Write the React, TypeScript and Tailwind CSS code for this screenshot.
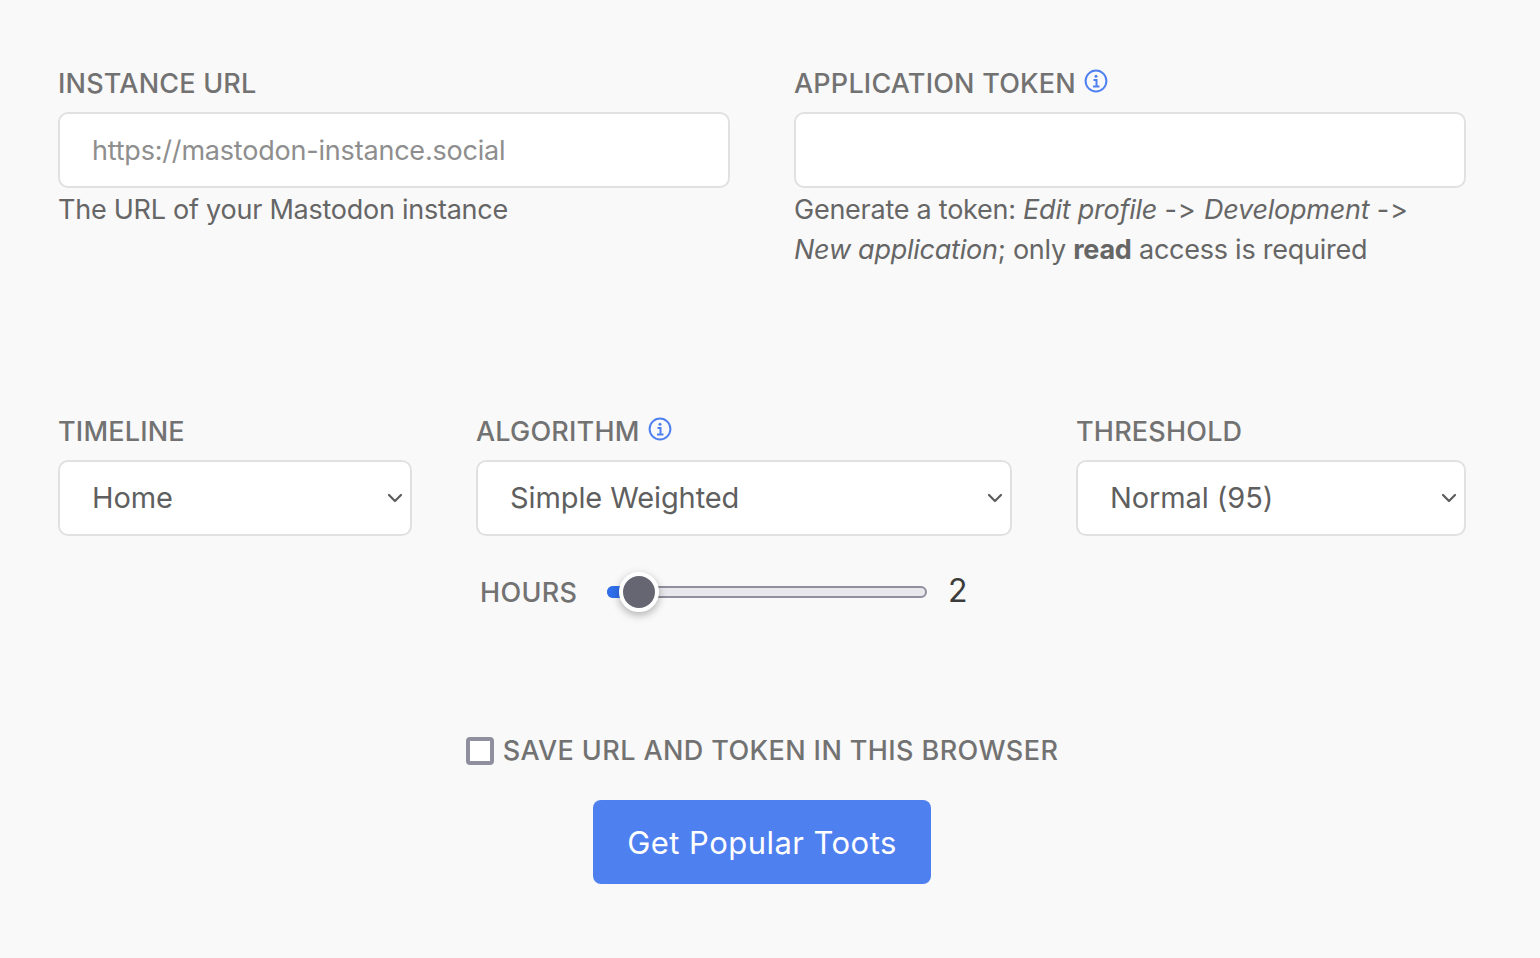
import { ChevronDown } from 'lucide-react';

function InfoIcon() {
  return (
    <svg width="24" height="24" viewBox="0 0 24 24" fill="none" stroke="#4f80ef" className="shrink-0">
      <circle cx="12" cy="12" r="10.4" strokeWidth="2" />
      <path d="M9.5 11h3v6.5M9 17.5h6.5" strokeWidth="2" />
      <circle cx="12" cy="7.2" r="1.5" fill="#4f80ef" stroke="none" />
    </svg>
  );
}

function Label({ text, info }: { text: string; info?: boolean }) {
  return (
    <div className="flex items-center gap-[8px] h-[40px] pt-[2px] text-[27px] leading-[38px] font-medium text-[#727272] tracking-[0.2px] uppercase">
      <span>{text}</span>
      {info && <span className="-mt-[6px]"><InfoIcon /></span>}
    </div>
  );
}

function SelectBox({ label, value, info, width }: { label: string; value: string; info?: boolean; width: string }) {
  return (
    <div className={width}>
      <Label text={label} info={info} />
      <div className="relative mt-[9px] h-[76px] bg-white border-2 border-[#e1e1e1] rounded-[10px] pl-[32px] flex items-center text-[29px] text-[#5f5f5f] tracking-[-0.1px]">
        {value}
        <ChevronDown size={24} strokeWidth={2.2} className="absolute right-[3px] top-[24px] text-[#5c5c5c]" />
      </div>
    </div>
  );
}

export default function App() {
  return (
    <div className="h-[958px] bg-[#f9f9f9] pl-[58px] pr-[74px] pt-[63px] overflow-hidden" style={{ fontFamily: 'Inter, "Liberation Sans", sans-serif' }}>
      <div className="flex gap-[64px]">
        <div className="w-[672px]">
          <Label text="Instance URL" />
          <input
            placeholder="https://mastodon-instance.social"
            className="mt-[9px] w-full h-[76px] bg-white border-2 border-[#e1e1e1] rounded-[10px] px-[32px] text-[27px] tracking-[-0.2px] placeholder:text-[#8e8e8e]"
          />
          <p className="text-[27px] leading-[40px] text-[#666666] mt-[2px] tracking-[-0.25px]">The URL of your Mastodon instance</p>
        </div>
        <div className="w-[672px]">
          <Label text="Application Token" info />
          <input className="mt-[9px] w-full h-[76px] bg-white border-2 border-[#e1e1e1] rounded-[10px] px-[32px] text-[28px]" />
          <p className="text-[27px] leading-[40px] text-[#666666] mt-[2px] tracking-[-0.25px]">
            Generate a token: <em>Edit profile</em> <span className="tracking-[1px]">-&gt;</span> <em>Development</em> <span className="tracking-[1px]">-&gt;</span> <em>New application</em>; only <strong>read</strong> access is required
          </p>
        </div>
      </div>

      <div className="flex gap-[64px] mt-[141px]">
        <SelectBox label="Timeline" value="Home" width="w-[354px]" />
        <div className="w-[536px]">
          <SelectBox label="Algorithm" value="Simple Weighted" info width="w-full" />
          <div className="flex items-center mt-[36px] h-[40px] pl-[4px]">
            <span className="text-[27px] pt-[2px] font-medium text-[#727272] w-[127px] tracking-[0.3px]">HOURS</span>
            <div className="relative w-[320px] h-[12px] rounded-full bg-[#e7e7ec] border-2 border-[#8f8f9d]">
              <div className="absolute -left-[2px] -top-[2px] w-[24px] h-[12px] rounded-l-full bg-[#2f6fed]" />
              <div className="absolute left-[10px] -top-[16px] w-[32px] h-[32px] rounded-full bg-[#666673] border-[4px] border-white shadow-[0_3px_8px_rgba(0,0,0,0.3)] box-content" />
            </div>
            <span className="ml-[21px] text-[32px] text-[#3c3c3c] -mt-[2px]">2</span>
          </div>
        </div>
        <SelectBox label="Threshold" value="Normal (95)" width="w-[390px]" />
      </div>

      <div className="w-[1408px] flex flex-col items-center mt-[119px]">
        <label className="flex items-center gap-[9px] h-[40px] text-[27px] font-medium text-[#727272] tracking-[0.4px] uppercase">
          <span className="w-[28px] h-[28px] bg-white border-[4px] border-[#8f8f9d] rounded-[4px]" />
          Save URL and token in this browser
        </label>
        <button className="mt-[29px] pt-[2px] w-[338px] h-[84px] bg-[#4f80ef] rounded-[8px] text-white text-[31px] tracking-[0.45px]">
          Get Popular Toots
        </button>
      </div>
    </div>
  );
}
